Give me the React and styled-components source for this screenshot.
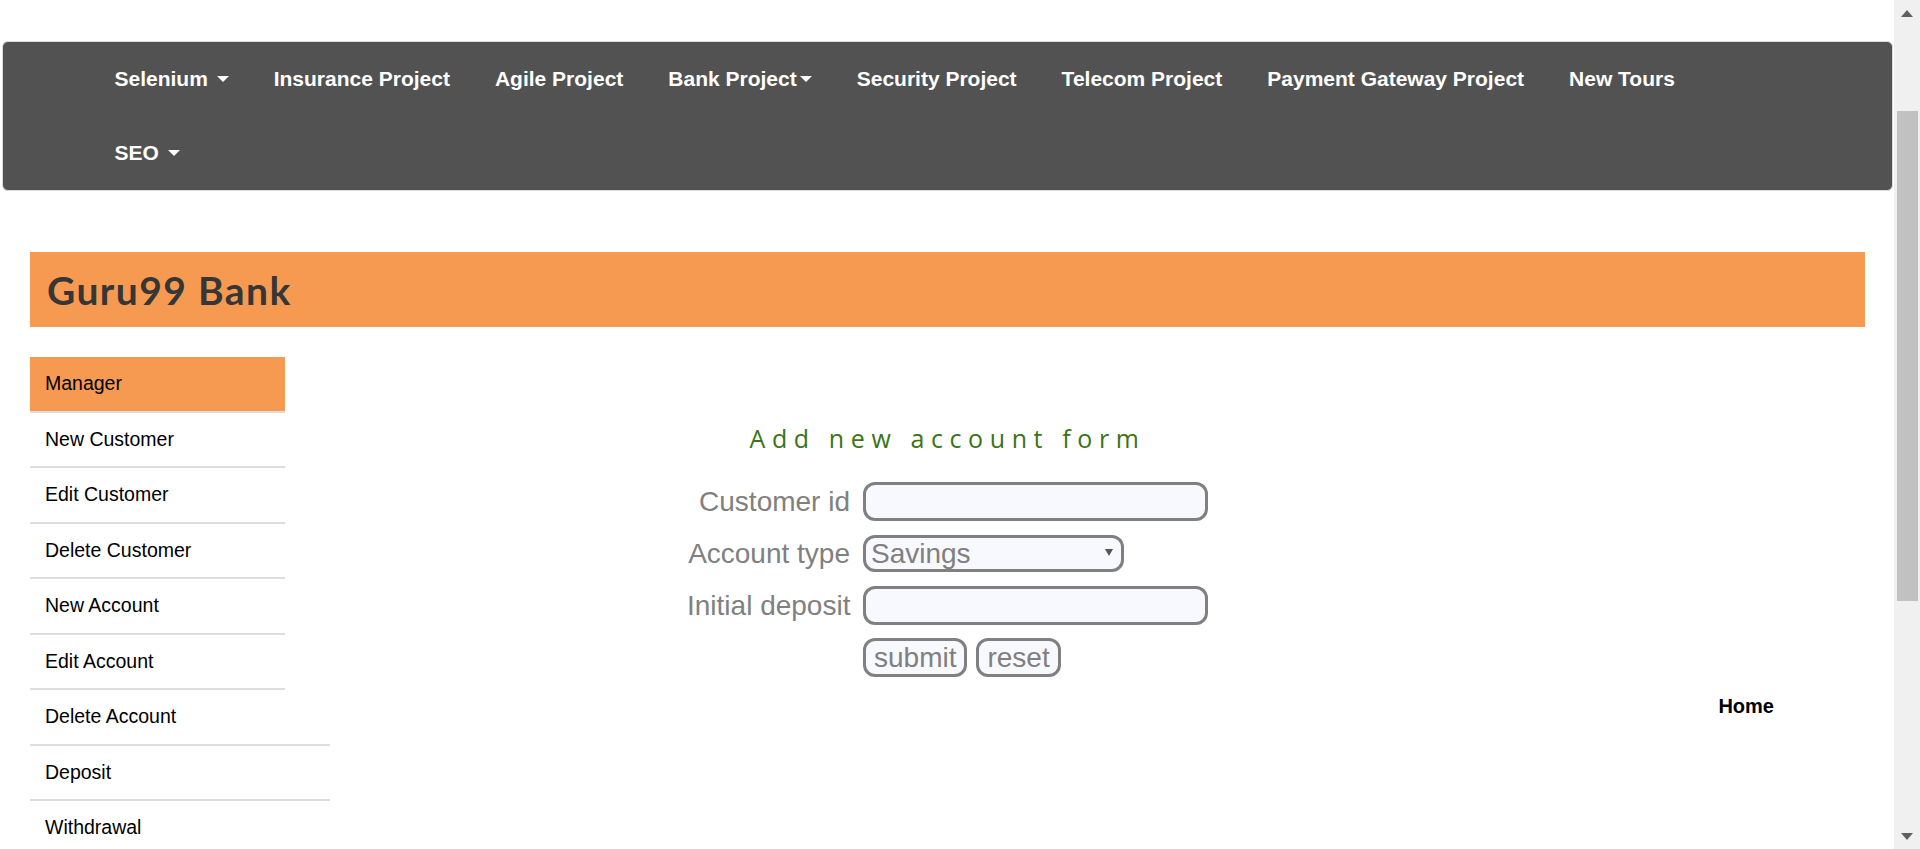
import React from "react";
import styled, { createGlobalStyle } from "styled-components";

const GlobalStyle = createGlobalStyle`
  html, body {
    margin: 0;
    padding: 0;
    background: #ffffff;
    overflow: hidden;
  }
  body {
    font-family: "Liberation Sans", Arial, sans-serif;
  }
  * { box-sizing: border-box; }
`;

const Shell = styled.div`
  display: flex;
  height: 100vh;
  overflow: hidden;
`;

const Page = styled.div`
  flex: 1;
  min-width: 0;
  padding-top: 41px;
  overflow: hidden;
`;

const Navbar = styled.nav`
  margin: 0 1px 0 2px;
  background: #525252;
  border: 1px solid #d9d9d9;
  border-radius: 6px;
  padding-left: 89px;
`;

const NavList = styled.ul`
  display: flex;
  flex-wrap: wrap;
  max-width: 1650px;
  list-style: none;
  margin: 0;
  padding: 0;
`;

const NavItem = styled.li`
  height: 74px;
  display: flex;
  align-items: center;
  padding: 0 22.5px 1px;
  color: #ffffff;
  font-size: 21px;
  font-weight: 700;
  white-space: pre;
`;

const Caret = styled.span`
  display: inline-block;
  width: 0;
  height: 0;
  margin-left: 3px;
  vertical-align: middle;
  border-top: 6px solid #ffffff;
  border-left: 6px solid transparent;
  border-right: 6px solid transparent;
`;

const Container = styled.div`
  margin-top: 61px;
  padding: 0 29px 0 30px;
`;

const Banner = styled.header`
  height: 75px;
  background: #f79a51;
  display: flex;
  align-items: center;
  padding-left: 17px;
`;

const BankTitle = styled.h2`
  margin: 0;
  font-family: "Lato", "Noto Sans", sans-serif;
  font-weight: 700;
  font-size: 39px;
  color: #363636;
  letter-spacing: 1.4px;
`;

const Content = styled.div`
  margin-top: 30px;
  display: grid;
  grid-template-columns: 300px 1fr 300px;
  grid-template-rows: auto 1fr;
`;

const SideMenu = styled.ul`
  grid-column: 1;
  grid-row: 1 / span 2;
  list-style: none;
  margin: 0;
  padding: 0;
`;

const SideItem = styled.li`
  width: ${(p) => (p.$wide ? "300px" : "255px")};
  height: ${(p) => (p.$first ? "53.5px" : "55.5px")};
  border-top: ${(p) => (p.$first ? "none" : "2px solid #dddddd")};
  background: ${(p) => (p.$active ? "#f79a51" : "transparent")};
  display: flex;
  align-items: center;
  padding-left: 15px;
  font-size: 19.5px;
  color: #000000;
`;

const FormArea = styled.section`
  grid-column: 2;
  grid-row: 1;
  padding-top: 66px;
`;

const FormHeading = styled.p`
  margin: 0 0 29px;
  text-align: center;
  font-family: "Open Sans", "Noto Sans", sans-serif;
  font-size: 25px;
  line-height: 30px;
  letter-spacing: 6.6px;
  color: #3a7416;
`;

const FormGrid = styled.form`
  display: grid;
  grid-template-columns: 163px 345px;
  column-gap: 13px;
  row-gap: 13px;
  justify-content: center;
  align-items: center;
`;

const FieldLabel = styled.label`
  text-align: right;
  white-space: nowrap;
  color: #808080;
  font-size: 28px;
  line-height: 39px;
`;

const TextInput = styled.input`
  width: 345px;
  height: 39px;
  border: 3px solid #808080;
  border-radius: 12px;
  background: #f8f8ff;
  font-family: "Liberation Sans", Arial, sans-serif;
  font-size: 28px;
  color: #808080;
  padding: 0 6px;
  outline: none;
`;

const SelectWrap = styled.div`
  position: relative;
  width: 261px;
  height: 37px;
`;

const Select = styled.select`
  appearance: none;
  -webkit-appearance: none;
  width: 100%;
  height: 100%;
  border: 3px solid #808080;
  border-radius: 12px;
  background: #f8f8ff;
  font-family: "Liberation Sans", Arial, sans-serif;
  font-size: 28px;
  line-height: 31px;
  color: #808080;
  padding: 0 5px;
  outline: none;
`;

const SelectArrow = styled.svg`
  position: absolute;
  right: 11px;
  top: 14px;
  pointer-events: none;
`;

const ButtonRow = styled.div`
  grid-column: 2;
  display: flex;
  gap: 9px;
`;

const FormButton = styled.button`
  height: 39px;
  padding: 0 8px;
  border: 3px solid #808080;
  border-radius: 12px;
  background: #f8f8ff;
  font-family: "Liberation Sans", Arial, sans-serif;
  font-size: 28px;
  line-height: 33px;
  color: #808080;
`;

const HomeLink = styled.a`
  grid-column: 2 / 4;
  grid-row: 2;
  justify-self: end;
  align-self: start;
  margin: 18px 91px 0 0;
  font-size: 20px;
  line-height: 23px;
  font-weight: 700;
  color: #000000;
  text-decoration: none;
`;

const ScrollRail = styled.div`
  width: 26px;
  height: 100vh;
  background: #f0f0f0;
  display: flex;
  flex-direction: column;
`;

const RailButton = styled.div`
  height: 26px;
  display: flex;
  align-items: center;
  justify-content: center;
`;

const RailTrack = styled.div`
  flex: 1;
  display: flex;
  justify-content: center;
`;

const RailThumb = styled.div`
  margin-top: 85px;
  width: 21px;
  height: 490px;
  background: #c1c1c1;
`;

const navItems = [
  { label: "Selenium ", caret: true },
  { label: "Insurance Project" },
  { label: "Agile Project" },
  { label: "Bank Project", caret: true },
  { label: "Security Project" },
  { label: "Telecom Project" },
  { label: "Payment Gateway Project" },
  { label: "New Tours" },
  { label: "SEO ", caret: true },
];

const menu = [
  { label: "Manager", active: true, first: true },
  { label: "New Customer" },
  { label: "Edit Customer" },
  { label: "Delete Customer" },
  { label: "New Account" },
  { label: "Edit Account" },
  { label: "Delete Account" },
  { label: "Deposit", wide: true },
  { label: "Withdrawal", wide: true },
];

function Arrow({ up }) {
  return (
    <svg width="12" height="7" viewBox="0 0 12 7">
      <path d={up ? "M0 7 L6 0 L12 7 Z" : "M0 0 L6 7 L12 0 Z"} fill="#606060" />
    </svg>
  );
}

export default function App() {
  return (
    <>
      <GlobalStyle />
      <Shell>
        <Page>
          <Navbar>
            <NavList>
              {navItems.map((n) => (
                <NavItem key={n.label}>
                  {n.label}
                  {n.caret && <Caret />}
                </NavItem>
              ))}
            </NavList>
          </Navbar>
          <Container>
            <Banner>
              <BankTitle>Guru99 Bank</BankTitle>
            </Banner>
            <Content>
              <SideMenu>
                {menu.map((m) => (
                  <SideItem key={m.label} $active={m.active} $first={m.first} $wide={m.wide}>
                    {m.label}
                  </SideItem>
                ))}
              </SideMenu>
              <FormArea>
                <FormHeading>Add new account form</FormHeading>
                <FormGrid onSubmit={(e) => e.preventDefault()}>
                  <FieldLabel>Customer id</FieldLabel>
                  <TextInput type="text" />
                  <FieldLabel>Account type</FieldLabel>
                  <SelectWrap>
                    <Select defaultValue="Savings">
                      <option>Savings</option>
                      <option>Current</option>
                    </Select>
                    <SelectArrow width="8" height="7" viewBox="0 0 8 7">
                      <path d="M0 0 L8 0 L4 7 Z" fill="#555555" />
                    </SelectArrow>
                  </SelectWrap>
                  <FieldLabel>Initial deposit</FieldLabel>
                  <TextInput type="text" />
                  <ButtonRow>
                    <FormButton type="submit">submit</FormButton>
                    <FormButton type="reset">reset</FormButton>
                  </ButtonRow>
                </FormGrid>
              </FormArea>
              <HomeLink href="#">Home</HomeLink>
            </Content>
          </Container>
        </Page>
        <ScrollRail>
          <RailButton>
            <Arrow up />
          </RailButton>
          <RailTrack>
            <RailThumb />
          </RailTrack>
          <RailButton>
            <Arrow />
          </RailButton>
        </ScrollRail>
      </Shell>
    </>
  );
}
